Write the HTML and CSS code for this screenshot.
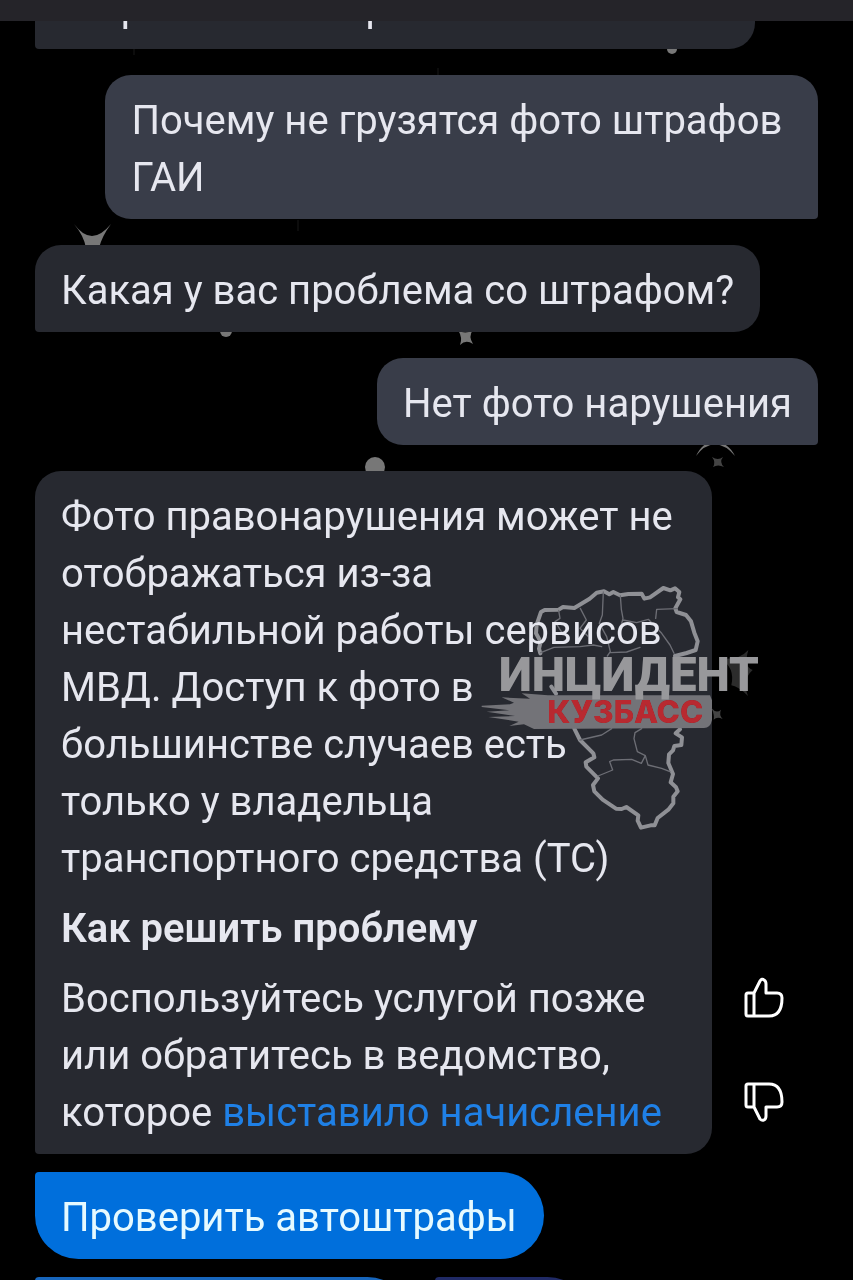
FILE: index.html
```
<!DOCTYPE html>
<html lang="ru">

<head>
    <meta charset="UTF-8">
    <meta name="viewport" content="width=device-width, initial-scale=1.0">
    <title>Чат</title>
    <link rel="stylesheet" href="styles.css">
</head>

<body>
    <header class="top-bar"></header>

    <!-- stars behind the chat -->
    <svg class="stars" width="853" height="1280" viewBox="0 0 853 1280" aria-hidden="true">
        <g fill="#777">
            <path d="M74 224Q83 236 92 236Q101 236 111 224Q102 236 99 248H86Q84 236 74 224Z" />
            <circle cx="672" cy="49" r="5" />
            <circle cx="226" cy="331" r="6" />
            <circle cx="375" cy="467" r="10" />
            <path d="M458 330Q465 335 473 330Q468 336 473 344Q466 339 460 345Q463 338 458 330Z" />
            <path d="M696 456Q703 441 715 442Q728 442 735 456Q726 445 715 444Q704 445 696 456Z" />
            <path d="M712 457Q718 461 723 457Q719 462 724 467Q718 464 713 467Q716 462 712 457Z" fill="#444" />
        </g>
        <path d="M134 48V55M438 68V76M298 220V231" stroke="#181818" />
    </svg>

    <main class="chat">
        <div class="message bot cut">Не работает запрос</div>
        <div class="message user long">Почему не грузятся фото штрафов<br>ГАИ</div>
        <div class="message bot">Какая у вас проблема со штрафом?</div>
        <div class="message user">Нет фото нарушения</div>

        <div class="answer">
            <div class="message bot">
                <p>Фото правонарушения может не<br>отображаться из-за<br>нестабильной работы сервисов<br>МВД. Доступ к фото в<br>большинстве случаев есть<br>только у владельца<br>транспортного средства (ТС)</p>
                <h2>Как решить проблему</h2>
                <p>Воспользуйтесь услугой позже<br>или обратитесь в ведомство,<br>которое <a href="#">выставило начисление</a></p>
            </div>
            <div class="feedback">
                <button type="button" aria-label="Нравится">
                    <svg width="44" height="44" viewBox="0 0 44 44">
                        <path d="M6 17H12L18 5Q20 2 22 4Q24 5 24 8V17H35Q40 17 40 22Q40 40 27 40H6Q4 40 4 38V19Q4 17 6 17ZM12 17V40" />
                    </svg>
                </button>
                <button type="button" aria-label="Не нравится">
                    <svg width="44" height="44" viewBox="0 0 44 44">
                        <path d="M6 4H27Q40 4 40 22Q40 27 35 27H24V36Q24 39 22 40Q20 41 18 39L12 27H6Q4 27 4 25V6Q4 4 6 4ZM12 4V27" />
                    </svg>
                </button>
            </div>
        </div>

        <div class="actions">
            <button type="button" class="action check">Проверить автоштрафы</button>
            <button type="button" class="action pay" aria-label="Оплатить"></button>
            <button type="button" class="action more" aria-label="Другое"></button>
        </div>
    </main>

    <!-- watermark -->
    <svg class="watermark" width="290" height="270" viewBox="0 0 870 810">
        <g fill="none" stroke="#8f9095" stroke-linejoin="round" stroke-linecap="round">
            <path stroke-width="12" d="M181 250L177 236L182 215L168 190L170 164L183 126L194 120L236 119L249 111L283 114L329 86L350 68L372 64L388 73L400 66L420 76L445 72L485 71L493 86L510 82L550 54L571 61L585 55L598 66L594 82L601 88L586 115L590 126L618 135L633 154L643 188L653 214L647 240L620 249L585 258" />
            <path stroke-width="12" d="M214 350L228 371M283 476L300 510L340 550L343 562L317 577L319 590L354 625L339 645L343 664L368 689L408 716L425 717L439 711L475 736L473 752L483 773L512 766L524 766L533 744L565 719L580 700L580 680L593 664L588 652L572 637L579 612L565 579L567 553L579 541L583 528L604 525L606 502L587 490L600 478" />
            <path stroke-width="4" stroke="#6d6e75" d="M236 121L240 145L225 155L244 185M301 115L319 150L300 175L330 205M370 66L367 135L358 160L380 200L391 245L382 258M421 77L424 118L429 145L420 180M429 150L470 158L505 148M527 145L530 118L590 116M505 148L545 190L570 225L582 250M182 248L222 232L300 230L340 225L365 230M391 248L440 246L480 232M300 510L365 495L395 476M485 476L465 488L462 506L472 545L496 557L484 580L455 568L400 570L389 575L398 600L354 618M496 557L504 585L545 595L570 605" />
        </g>
        <g fill="#737378">
            <path d="M5 407L90 403L102 398L65 382L150 386L125 370L204 376L690 376L696 391V450Q691 474 672 474L162 477L132 463L88 468L116 455L25 441L105 438L20 425L88 421L5 411Z" />
            <path d="M695 415Q709 432 723 419Q716 435 728 447Q711 439 701 449Q704 437 695 415Z" fill="#444" />
            <path d="M805 240Q777 272 720 265Q766 292 754 346Q773 348 804 378Q785 330 818 300Q790 290 805 240Z" fill="#2c2c2c" />
        </g>
        <text class="brand" x="57" y="362">ИНЦИДЕНТ</text>
        <text class="region" x="202" y="458">КУЗБАСС</text>
    </svg>
</body>

</html>
```
FILE: styles.css
```
* {
    box-sizing: border-box;
}

body {
    margin: 0;
    height: 100vh;
    overflow: hidden;
    position: relative;
    background-color: #000;
    color: #e6e7ef;
    font-family: Roboto, sans-serif;
    font-size: 40px;
    line-height: 57px;
}

.top-bar {
    height: 21px;
    background-color: #252429;
}

.stars {
    position: absolute;
    top: 0;
    left: 0;
}

/* chat */
.chat {
    position: relative;
    display: flex;
    flex-direction: column;
    gap: 26px;
    padding: 0 35px;
}

.message {
    padding: 17px 26px 13px;
    border-radius: 26px;
    white-space: nowrap;
}

.bot {
    align-self: flex-start;
    background-color: #272930;
    border-bottom-left-radius: 4px;
}

.user {
    align-self: flex-end;
    background-color: #393d49;
    border-bottom-right-radius: 4px;
}

/* the oldest message is scrolled under the top bar */
.cut {
    display: flex;
    align-items: flex-end;
    width: 92%;
    height: 28px;
    overflow: hidden;
    border-top-left-radius: 0;
    border-top-right-radius: 0;
    padding-top: 0;
}

.long {
    width: 91%;
}

.answer {
    display: flex;
}

.answer .message {
    flex: 1;
}

.answer p {
    margin: 0;
}

.answer h2 {
    margin: 13px 0;
    font-size: 40px;
    font-weight: 600;
    line-height: 57px;
}

.answer a {
    color: #1f80e6;
    text-decoration: none;
}

.feedback {
    display: flex;
    flex-direction: column;
    justify-content: flex-end;
    gap: 60px;
    padding: 0 32px 30px 30px;
}

.feedback button {
    width: 44px;
    height: 44px;
    padding: 0;
    border: none;
    background: none;
    cursor: pointer;
}

.feedback svg {
    display: block;
    fill: none;
    stroke: #fff;
    stroke-width: 3;
    stroke-linejoin: round;
}

/* buttons under the answer */
.actions {
    display: flex;
    flex-wrap: wrap;
    gap: 18px 24px;
    margin-top: -8px;
}

.action {
    height: 87px;
    padding: 4px 26px 0;
    border: none;
    border-radius: 4px 44px 44px 44px;
    background-color: #006fdc;
    color: #e6faff;
    font: inherit;
    text-align: left;
    cursor: pointer;
}

.check {
    width: 65%;
    margin-right: 30%;
}

.pay {
    width: 48%;
    background-color: #1766bd;
}

.more {
    width: 20%;
    background-color: #202a66;
}

.watermark {
    position: absolute;
    top: 570px;
    left: 480px;
    mix-blend-mode: lighten;
    pointer-events: none;
}

.brand {
    font-family: Roboto, sans-serif;
    font-size: 142px;
    font-weight: 900;
    fill: #98989b;
}

.region {
    font-family: Inter, sans-serif;
    font-size: 94px;
    font-weight: 800;
    fill: #b8151c;
}
```
